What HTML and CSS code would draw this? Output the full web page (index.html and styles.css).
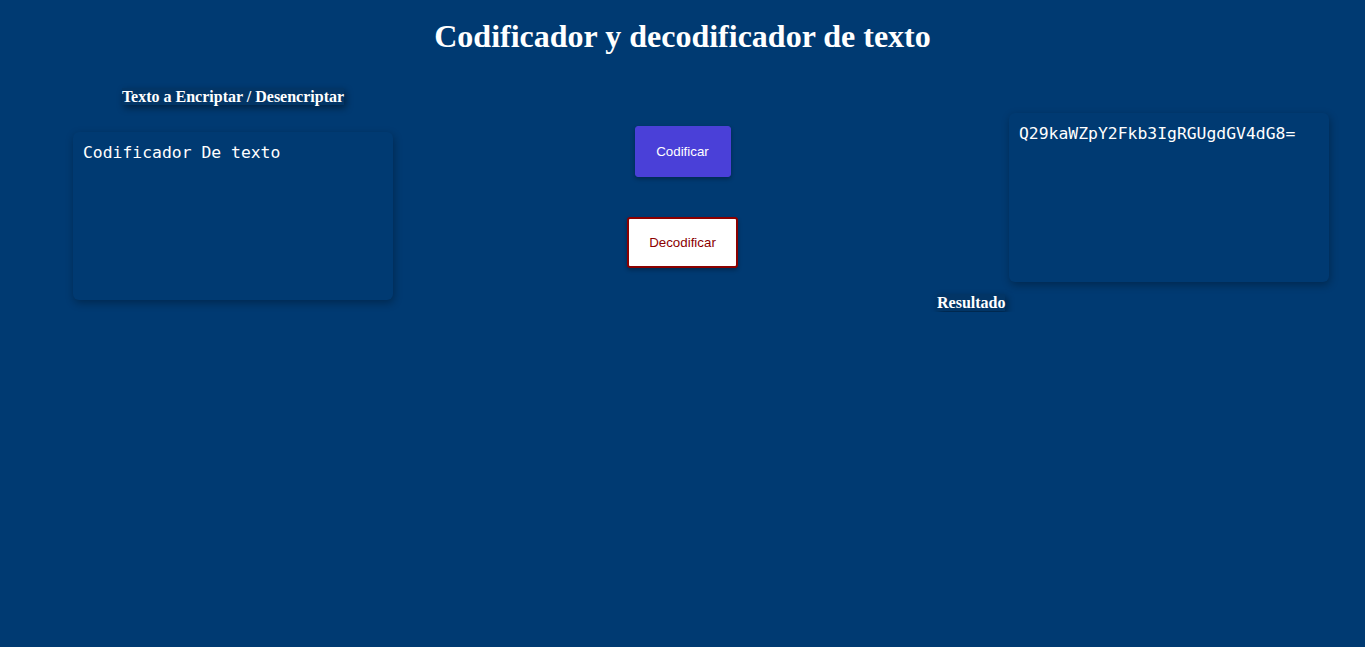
FILE: index.html
```html
<!DOCTYPE html>
<html lang="es">
<head>
<meta charset="utf-8">
<title>Codificador y decodificador de texto</title>
<link rel="stylesheet" href="styles.css">
</head>
<body>
<h1 class="title">Codificador y decodificador de texto</h1>
<main class="layout">
  <section class="col col-left">
    <div class="label-wrap"><span class="label">Texto a Encriptar / Desencriptar</span></div>
    <textarea class="box box-left">Codificador De texto</textarea>
  </section>
  <section class="col col-mid">
    <button class="btn btn-encode">Codificar</button>
    <button class="btn btn-decode">Decodificar</button>
  </section>
  <section class="col col-right">
    <textarea class="box box-right">Q29kaWZpY2Fkb3IgRGUgdGV4dG8=</textarea>
    <div class="result-wrap"><span class="label">Resultado</span></div>
  </section>
</main>
</body>
</html>
```
FILE: styles.css
```css
html, body {
  margin: 0;
  padding: 0;
  background: #003a72;
  color: #ffffff;
  font-family: "Liberation Serif", "Times New Roman", serif;
}

.title {
  margin: 18px 0 0;
  font-size: 32px;
  line-height: 37px;
  font-weight: bold;
  text-align: center;
}

.layout {
  display: grid;
  grid-template-columns: 1fr 1fr 1fr;
  margin-top: 33px;
  align-items: start;
}

.col {
  display: flex;
  flex-direction: column;
}

.col-left {
  padding-left: 73px;
}

.label-wrap {
  width: 320px;
  text-align: center;
  line-height: 18px;
}

.label {
  font-weight: bold;
  font-size: 16px;
  background: #023566;
  box-shadow: 2px 3px 7px rgba(0, 0, 0, 0.4);
}

.box {
  display: block;
  box-sizing: border-box;
  width: 320px;
  height: 168px;
  margin: 0;
  padding: 11px 10px;
  border: none;
  border-radius: 6px;
  background: #003a72;
  color: #ffffff;
  font-family: "DejaVu Sans Mono", "Liberation Mono", monospace;
  font-size: 16.4px;
  line-height: 19px;
  resize: none;
  outline: none;
  box-shadow: 1px 3px 8px rgba(0, 0, 0, 0.3);
}

.box-left {
  margin-top: 26px;
}

.col-mid {
  align-items: center;
  padding-top: 38px;
}

.btn {
  height: 51px;
  font-family: "Liberation Sans", Arial, sans-serif;
  font-size: 13.33px;
  border-radius: 3px;
  cursor: pointer;
  box-shadow: 0 2px 4px rgba(0, 0, 0, 0.3);
}

.btn-encode {
  width: 96px;
  padding: 0;
  background: #4a40d8;
  color: #ffffff;
  border: 1px solid #4a40d8;
}

.btn-decode {
  margin-top: 40px;
  padding: 0 20px;
  background: #ffffff;
  color: #8b0000;
  border: 2px solid #8b0000;
}

.col-right {
  padding-top: 25px;
}

.box-right {
  margin-left: 99px;
  height: 169px;
}

.result-wrap {
  margin-top: 12px;
  padding-left: 27px;
  line-height: 18px;
}
```
